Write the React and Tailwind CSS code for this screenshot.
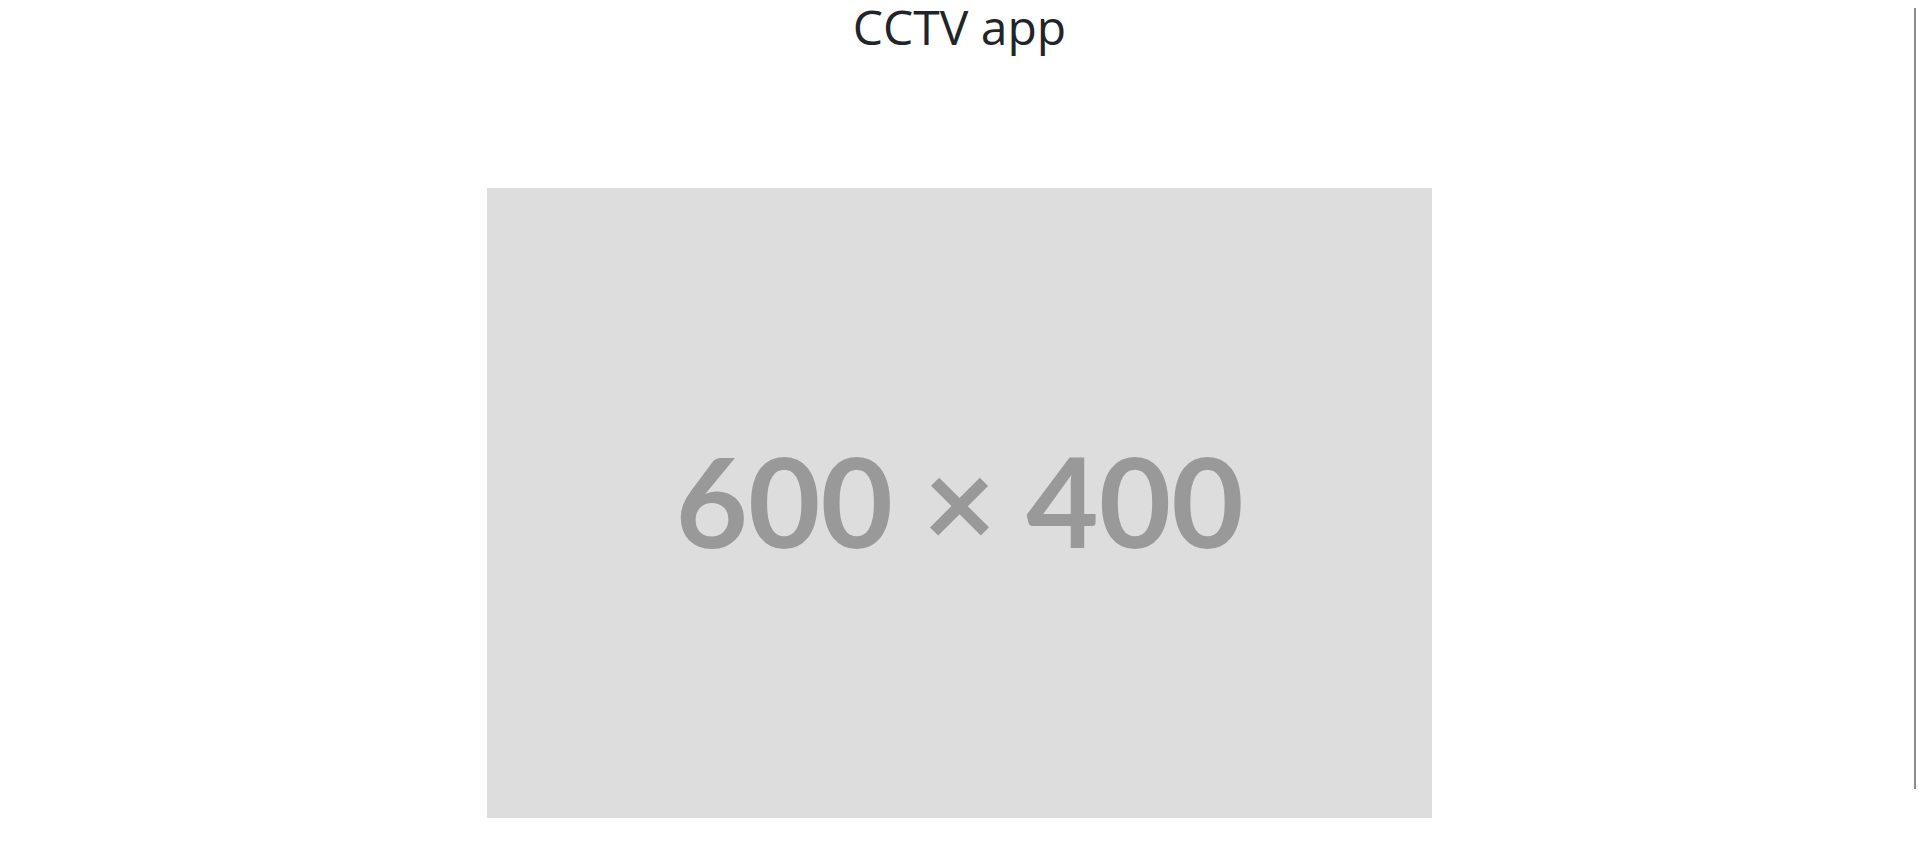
export default function App() {
  return (
    <div className="relative min-h-[851px] bg-white">
      {/* Title */}
      <h1 className="m-0 pt-[3px] text-center text-[48px] leading-none font-normal text-[#212529] font-['Open_Sans',sans-serif]">
        CCTV app
      </h1>

      {/* Camera placeholder */}
      <div className="mt-[137px] flex justify-center">
        <div className="w-[945px] h-[630px] bg-[#dddddd] flex items-center justify-center pb-[6px]">
          <span className="font-['Lato',sans-serif] font-bold text-[125px] leading-none text-[#999999]">
            600 × 400
          </span>
        </div>
      </div>

      {/* right edge line */}
      <div className="absolute right-[3px] top-[8px] w-[2px] h-[781px] bg-[#8a8a8a]" />
    </div>
  );
}
